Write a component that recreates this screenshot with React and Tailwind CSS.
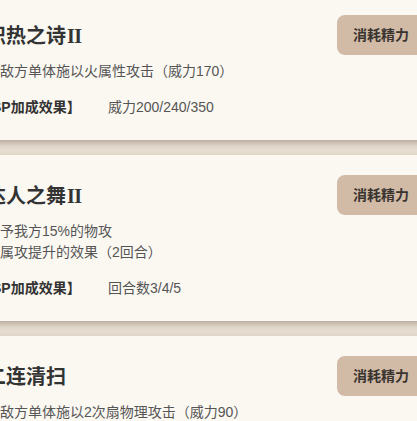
import React from "react";

const skills = [
  {
    name: "炽热之诗",
    roman: "II",
    desc: ["对敌方单体施以火属性攻击（威力170）"],
    sp: "威力200/240/350",
  },
  {
    name: "达人之舞",
    roman: "II",
    desc: ["赋予我方15%的物攻", "和属攻提升的效果（2回合）"],
    sp: "回合数3/4/5",
  },
  {
    name: "二连清扫",
    roman: "",
    desc: ["对敌方单体施以2次扇物理攻击（威力90）"],
    sp: "威力100/120/150",
  },
];

function Card({ s }) {
  return (
    <div className="bg-[#fbf8f2] pl-[16px] pr-[22px] pt-[20px] pb-[22px] shadow-[0_3px_6px_rgba(70,50,30,0.3)]">
      <div className="flex items-center justify-between h-[40px]">
        <div
          className="text-[20px] leading-[28px] font-bold text-[#333]"
          style={{ fontFamily: '"Noto Sans CJK SC", sans-serif' }}
        >
          {s.name}
          {s.roman && (
            <span
              className="ml-[1px] tracking-[-0.5px]"
              style={{ fontFamily: '"Liberation Serif", serif' }}
            >
              {s.roman}
            </span>
          )}
        </div>
        <div className="h-[40px] px-[16px] flex items-center rounded-lg bg-[#d1bba7] text-[14px] font-semibold text-[#3a3430]">
          消耗精力
        </div>
      </div>
      <div className="mt-[6px] text-[14px] leading-[21px] text-[#555]">
        {s.desc.map((d, i) => (
          <div key={i}>{d}</div>
        ))}
      </div>
      <div className="mt-[15px] flex text-[14px] leading-[21px]">
        <div className="w-[130px] -ml-[8px] font-bold text-[#333]">【SP加成效果】</div>
        <div className="text-[#555]">{s.sp}</div>
      </div>
    </div>
  );
}

export default function App() {
  return (
    <div
      className="w-[417px] h-[421px] overflow-hidden bg-[#e6ddd0]"
      style={{ fontFamily: '"Liberation Sans", "Noto Sans CJK SC", sans-serif' }}
    >
      <div className="flex flex-col gap-[15px] -mt-[5px] -mx-[30px]">
        {skills.map((s, i) => (
          <Card key={i} s={s} />
        ))}
      </div>
    </div>
  );
}
